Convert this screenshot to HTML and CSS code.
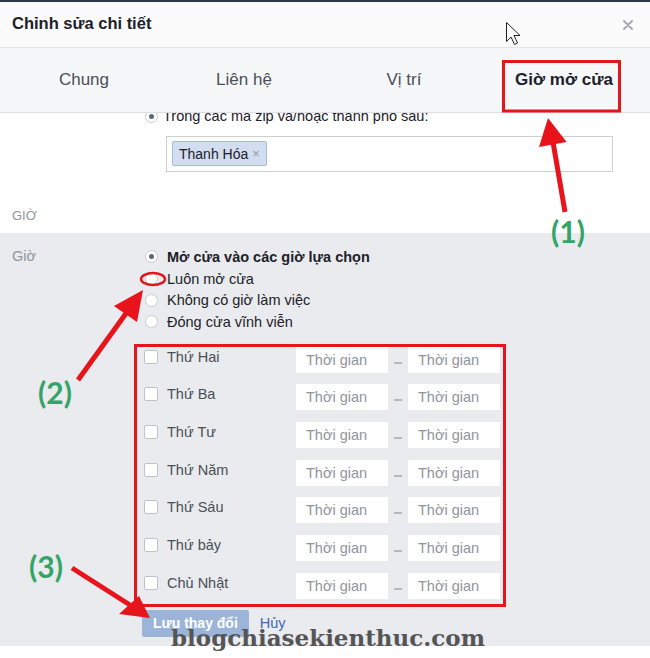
FILE: index.html
```html
<!DOCTYPE html>
<html lang="vi">
<head>
<meta charset="utf-8">
<title>Chỉnh sửa chi tiết</title>
<link rel="stylesheet" href="styles.css">
</head>
<body>
<div class="topbar"></div>
<header class="header">
  <h1 class="title">Chỉnh sửa chi tiết</h1>
  <svg class="close" width="10" height="10" viewBox="0 0 10 10"><path d="M1 1L9 9M9 1L1 9" stroke="#a3a6ab" stroke-width="1.8" stroke-linecap="round"/></svg>
</header>
<nav class="tabs">
  <div class="tab">Chung</div>
  <div class="tab">Liên hệ</div>
  <div class="tab">Vị trí</div>
  <div class="tab active">Giờ mở cửa</div>
</nav>
<section class="area">
  <div class="area-row"><span class="radio on"></span><span>Trong các mã zip và/hoặc thành phố sau:</span></div>
  <div class="tagbox"><span class="tag">Thanh Hóa <span class="tag-x">×</span></span></div>
  <div class="section-title">GIỜ</div>
</section>
<section class="hours">
  <div class="hours-label">Giờ</div>
  <div class="hours-body">
    <div class="radios">
      <div class="opt bold"><span class="radio on"></span>Mở cửa vào các giờ lựa chọn</div>
      <div class="opt"><span class="radio"></span>Luôn mở cửa</div>
      <div class="opt"><span class="radio"></span>Không có giờ làm việc</div>
      <div class="opt"><span class="radio"></span>Đóng cửa vĩnh viễn</div>
    </div>
    <div class="days">
      <div class="day"><span class="checkbox"></span><span class="day-name">Thứ Hai</span><span class="time">Thời gian</span><span class="dash"></span><span class="time">Thời gian</span></div>
      <div class="day"><span class="checkbox"></span><span class="day-name">Thứ Ba</span><span class="time">Thời gian</span><span class="dash"></span><span class="time">Thời gian</span></div>
      <div class="day"><span class="checkbox"></span><span class="day-name">Thứ Tư</span><span class="time">Thời gian</span><span class="dash"></span><span class="time">Thời gian</span></div>
      <div class="day"><span class="checkbox"></span><span class="day-name">Thứ Năm</span><span class="time">Thời gian</span><span class="dash"></span><span class="time">Thời gian</span></div>
      <div class="day"><span class="checkbox"></span><span class="day-name">Thứ Sáu</span><span class="time">Thời gian</span><span class="dash"></span><span class="time">Thời gian</span></div>
      <div class="day"><span class="checkbox"></span><span class="day-name">Thứ bảy</span><span class="time">Thời gian</span><span class="dash"></span><span class="time">Thời gian</span></div>
      <div class="day"><span class="checkbox"></span><span class="day-name">Chủ Nhật</span><span class="time">Thời gian</span><span class="dash"></span><span class="time">Thời gian</span></div>
    </div>
    <div class="actions"><button class="save">Lưu thay đổi</button><a class="cancel">Hủy</a></div>
  </div>
</section>

<div class="overlay">
  <svg class="marks" width="650" height="658" viewBox="0 0 650 658">
    <rect x="503.5" y="61.5" width="116" height="49.5" fill="none" stroke="#e3161e" stroke-width="3"/>
    <rect x="135.5" y="345.5" width="369" height="260" fill="none" stroke="#e3161e" stroke-width="3"/>
    <ellipse cx="153" cy="279" rx="12" ry="6" fill="none" stroke="#e3161e" stroke-width="2.5"/>
    <line x1="565" y1="212" x2="553" y2="142" stroke="#e8141c" stroke-width="5"/>
    <polygon points="548,118 566.6,142 539,147" fill="#e8141c"/>
    <line x1="78" y1="380" x2="127" y2="312" stroke="#e8141c" stroke-width="5"/>
    <polygon points="143,290 137,322 114,306" fill="#e8141c"/>
    <line x1="72" y1="568" x2="130" y2="605" stroke="#e8141c" stroke-width="5"/>
    <polygon points="150,618 119,614 139,596" fill="#e8141c"/>
    <path d="M506.5 22.5 L506.5 41.5 L511 37 L514.5 44.5 L517.5 43 L514 35.5 L520 35.5 Z" fill="#fff" stroke="#222" stroke-width="1" stroke-linejoin="round"/>
  </svg>
  <span class="step s1">(1)</span>
  <span class="step s2">(2)</span>
  <span class="step s3">(3)</span>
  <span class="watermark">blogchiasekienthuc.com</span>
</div>
</body>
</html>
```

FILE: styles.css
```css
body {
  margin: 0;
  width: 650px;
  height: 658px;
  overflow: hidden;
  position: relative;
  background: #fff;
  font-family: "Liberation Sans", Arial, sans-serif;
}

.topbar {
  height: 2px;
  background: #2f3846;
}

.header {
  height: 46px;
  box-sizing: border-box;
  border-bottom: 1px solid #e3e5e8;
  background: #fbfbfc;
  display: flex;
  justify-content: space-between;
  align-items: flex-start;
  padding: 11px 17px 0 12px;
}

.title {
  margin: 0;
  font-size: 16.5px;
  line-height: 20px;
  font-weight: bold;
  color: #1d2129;
}

.close {
  margin-top: 7px;
}

.tabs {
  height: 65px;
  box-sizing: border-box;
  border-bottom: 1px solid #dddfe2;
  background: #f6f7f9;
  display: grid;
  grid-template-columns: repeat(4, 160px);
  padding: 22px 0 0 4px;
}

.tab {
  text-align: center;
  font-size: 17px;
  line-height: 20px;
  color: #4b4f56;
}

.tab.active {
  font-weight: bold;
  color: #1d2129;
}

.area {
  height: 120px;
  overflow: hidden;
  box-sizing: border-box;
}

.area-row {
  margin: -8px 0 0 145px;
  display: flex;
  align-items: center;
  gap: 5px;
  height: 22px;
  font-size: 14.5px;
  color: #1d2129;
}

.tagbox {
  margin: 9px 0 0 166px;
  width: 447px;
  height: 36px;
  box-sizing: border-box;
  border: 1px solid #ccd0d5;
  background: #fff;
  padding: 4px 5px;
  display: flex;
}

.tag {
  height: 25px;
  box-sizing: border-box;
  border: 1px solid #a7bbdc;
  background: #d2ddef;
  border-radius: 2px;
  padding: 0 6px;
  display: flex;
  align-items: center;
  gap: 4px;
  font-size: 14px;
  color: #1d2129;
}

.tag-x {
  color: #959aa2;
  font-size: 13px;
}

.section-title {
  margin: 36px 0 0 12px;
  font-size: 13px;
  line-height: 16px;
  color: #90949c;
}

.hours {
  background: #e9ebee;
  display: flex;
  padding: 13px 0 9px 12px;
}

.hours-label {
  width: 133px;
  flex: none;
  font-size: 14.5px;
  line-height: 21.7px;
  color: #90949c;
}

.hours-body {
  display: flex;
  flex-direction: column;
}

.radios {
  display: flex;
  flex-direction: column;
}

.opt {
  display: flex;
  align-items: center;
  gap: 9px;
  height: 21.7px;
  font-size: 14.5px;
  color: #1d2129;
}

.opt.bold {
  font-weight: bold;
}

.radio {
  width: 13px;
  height: 13px;
  box-sizing: border-box;
  border-radius: 50%;
  border: 1px solid #c9ccd1;
  background: #fff;
  display: flex;
  align-items: center;
  justify-content: center;
  flex: none;
}

.radio.on::after {
  content: "";
  width: 5px;
  height: 5px;
  border-radius: 50%;
  background: #606770;
}

.days {
  margin: 14px 0 0 -1px;
  display: flex;
  flex-direction: column;
  gap: 11.67px;
}

.day {
  display: flex;
  align-items: flex-start;
  height: 26px;
}

.checkbox {
  width: 14px;
  height: 14px;
  box-sizing: border-box;
  border: 1px solid #bec3c9;
  border-radius: 2px;
  background: #fff;
  margin-top: 3px;
  flex: none;
}

.day-name {
  margin-left: 9px;
  width: 129px;
  flex: none;
  line-height: 20px;
  font-size: 14.5px;
  color: #4b4f56;
}

.time {
  width: 92px;
  height: 26px;
  flex: none;
  background: #fff;
  box-sizing: border-box;
  padding-left: 10px;
  font-size: 14.5px;
  line-height: 26px;
  color: #90949c;
}

.dash {
  width: 8px;
  height: 2px;
  background: #b4b7bc;
  margin: 15px 6px 0 6px;
  flex: none;
}

.actions {
  margin: 11px 0 0 -3px;
  display: flex;
  align-items: center;
  gap: 11px;
}

.save {
  height: 27px;
  padding: 0 10px;
  border: 1px solid #9cb4d8;
  background: #9cb4d8;
  color: #fff;
  font-family: "Liberation Sans", Arial, sans-serif;
  font-weight: bold;
  font-size: 14px;
  border-radius: 2px;
}

.cancel {
  color: #4267b2;
  font-size: 14.5px;
}

.overlay {
  position: absolute;
  left: 0;
  top: 0;
  width: 650px;
  height: 658px;
  pointer-events: none;
}

.marks {
  position: absolute;
  left: 0;
  top: 0;
}

.step {
  position: absolute;
  font-family: Lato, "DejaVu Sans", sans-serif;
  font-weight: 700;
  font-size: 30px;
  line-height: 1;
  color: #34a468;
}

.s1 { left: 551px; top: 216px; }
.s2 { left: 38px; top: 377px; }
.s3 { left: 29px; top: 551px; }

.watermark {
  position: absolute;
  left: 171px;
  top: 626px;
  font-family: "DejaVu Serif", serif;
  font-weight: bold;
  font-size: 23px;
  line-height: 1;
  color: #555;
}
```
